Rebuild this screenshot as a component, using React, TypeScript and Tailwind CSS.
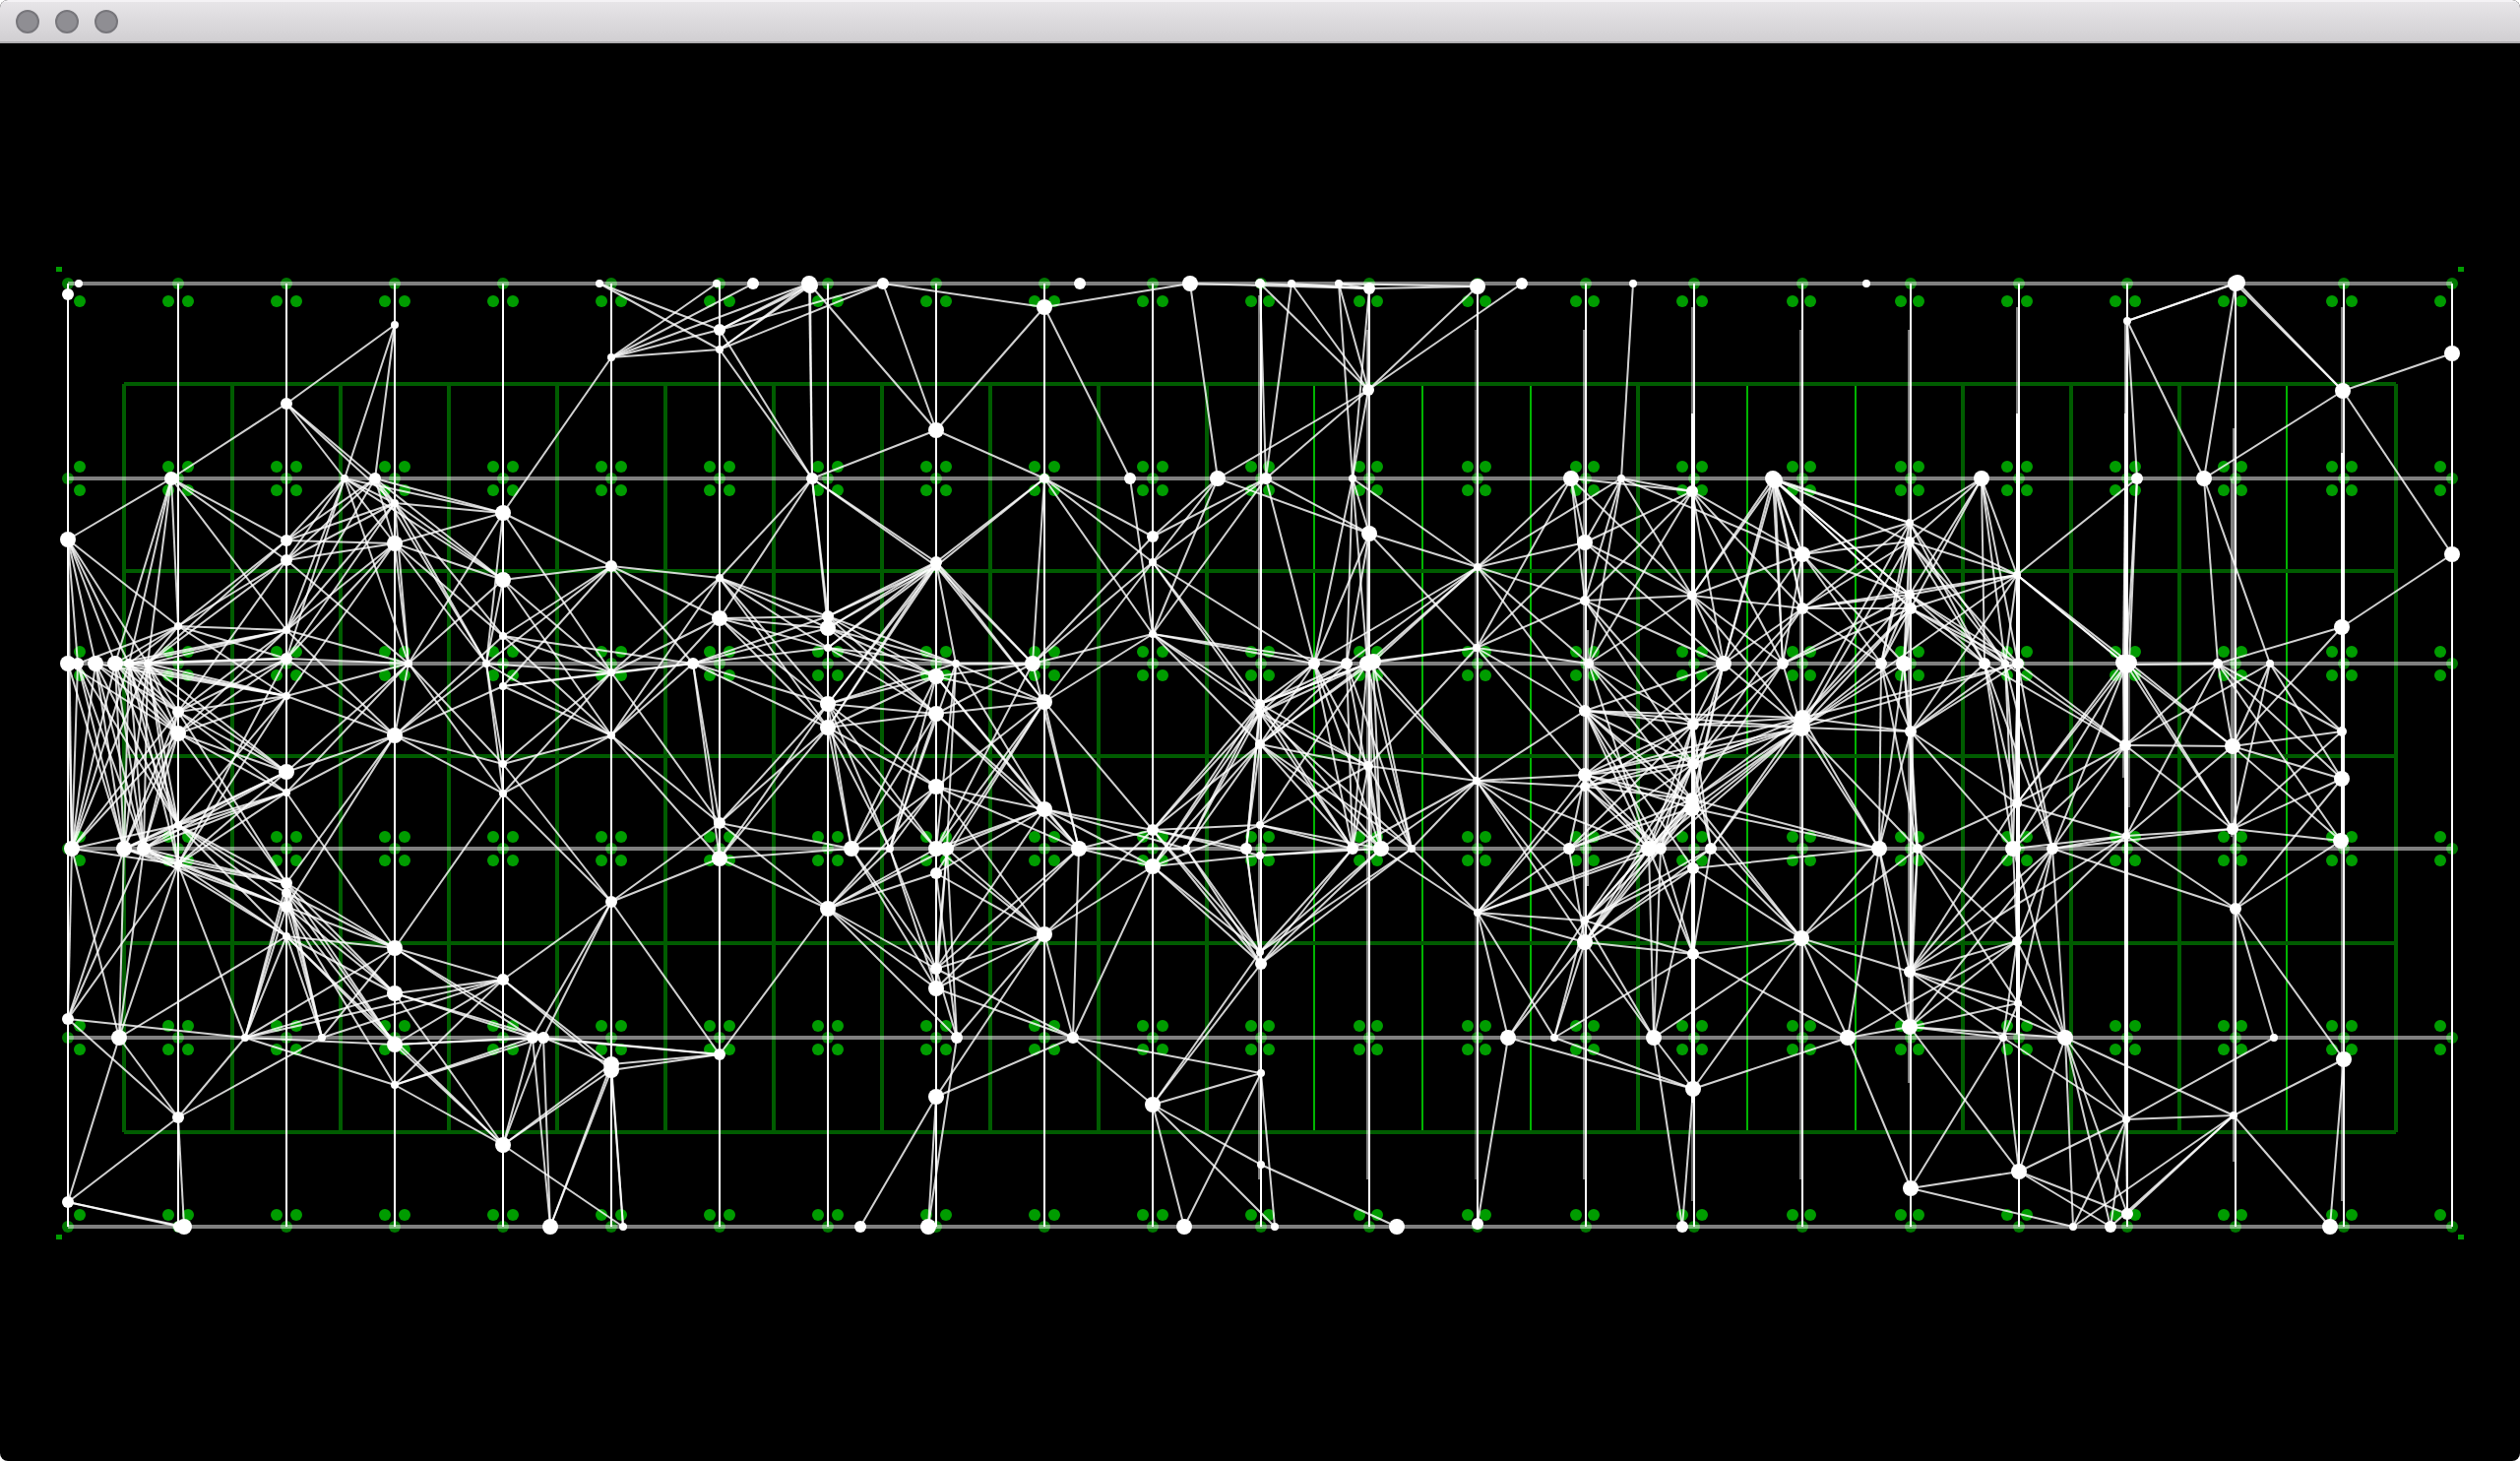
import React from "react";

const COLUMNS = [
  69, 181, 291, 401, 511, 621, 731, 841, 951, 1061, 1171, 1281, 1391, 1501, 1611, 1721, 1831, 1941,
  2051, 2161, 2271, 2381, 2491,
];
const ROWS = [288, 486, 674, 862, 1054, 1246];

const ZONE_COLUMNS = [
  126, 236, 346, 456, 566, 676, 786, 896, 1006, 1116, 1226, 1335, 1445, 1555, 1664, 1775, 1885, 1994,
  2104, 2214, 2323, 2434,
];
const CRISP_ZONE_COLUMNS = new Set([1335, 1445, 1555, 1775, 1885, 2323]);
const ZONE_ROWS = [390, 580, 768, 958, 1150];

const PILLAR_XS = [
  81, 171, 191, 281, 301, 391, 411, 501, 521, 611, 631, 721, 741, 831, 851, 941, 961, 1051, 1071, 1161,
  1181, 1271, 1289, 1381, 1399, 1491, 1509, 1601, 1619, 1709, 1729, 1821, 1839, 1931, 1949, 2039, 2059,
  2149, 2169, 2259, 2277, 2369, 2389, 2479,
];
const PILLAR_YS = [306, 474, 498, 662, 686, 850, 874, 1042, 1066, 1234];

const CORNERS = [
  [60, 273],
  [60, 1256],
  [2500, 273],
  [2500, 1256],
];

/* Second stroke beside a column: x, top, bottom, opacity */
const SHADOW_COLUMNS = [
  [1279, 300, 1198, 0.5],
  [1389, 335, 1198, 0.5],
  [1393, 690, 862, 0.6],
  [1499, 335, 1198, 0.3],
  [1609, 335, 1198, 0.5],
  [1613, 640, 900, 0.6],
  [1719, 312, 420, 0.5],
  [1719, 420, 1120, 1],
  [1719, 1120, 1220, 0.4],
  [1829, 335, 1198, 0.45],
  [1939, 335, 1100, 0.5],
  [1943, 740, 1043, 0.7],
  [2049, 312, 420, 0.5],
  [2049, 420, 1050, 1],
  [2159, 326, 420, 0.6],
  [2159, 420, 1137, 1],
  [2157, 674, 790, 0.5],
  [2163, 674, 820, 0.4],
  [2269, 435, 1180, 0.5],
  [2267, 486, 850, 0.5],
  [2379, 312, 460, 0.5],
  [2379, 460, 860, 1],
  [2379, 860, 1220, 0.5],
];

/* id x y radius */
const NODE_DATA = `
a0 69 299 6|a1 80 288 4|a2 69 548 8|a3 69 674 8|a4 79 674 6|a5 97 674 8|a6 117 674 8|a7 131 674 5|a8 150 674 4
a9 73 862 8|a10 126 862 8|a11 146 862 7|a12 69 1035 6|a13 121 1054 8|a14 69 1221 6|a15 187 1246 8|a16 182 1246 6
b0 174 486 7|b1 181 636 4|b2 181 723 6|b3 181 745 8|b4 181 838 4|b5 181 878 4|b6 181 1135 6|x1 249 1054 4|x2 327 1054 4
c0 291 410 6|c1 291 549 6|c2 291 569 6|c3 291 640 4|c4 291 669 6|c5 291 707 4|c6 291 784 8|c7 291 805 4|c8 291 897 6
c9 291 921 6|c10 291 951 4|c11 291 907 5|x3 350 486 4|x4 381 486 6
d0 401 330 4|d1 401 511 4|d2 401 552 8|d3 415 674 4|d4 401 747 8|d5 401 963 8|d6 401 1009 8|d7 401 1061 8|d8 401 1102 4
e0 511 521 8|e1 511 589 8|e2 494 674 4|e3 511 646 4|e4 511 697 4|e5 511 776 4|e6 511 806 4|e7 511 995 6|e8 541 1054 6
e9 552 1054 6|e10 511 1163 8|e11 559 1246 8
f0 609 288 4|f1 621 363 4|f2 621 575 6|f3 621 683 4|f4 621 747 4|f5 621 916 6|f6 621 1081 8|f7 633 1246 4|f8 621 1087 8
g0 728 288 4|g1 765 288 6|g2 731 335 6|g3 731 355 4|g4 731 587 4|g5 731 628 8|g6 704 674 6|g7 731 836 6|g8 731 872 8|g9 731 1071 6
h0 822 288 8|h1 825 486 6|h2 841 626 6|h3 841 638 8|h4 841 658 4|h5 841 715 8|h6 841 739 8|h7 865 862 8|h8 841 923 8
h9 874 1246 6|h10 897 288 6|h11 823 290 8
i0 951 437 8|i1 951 571 6|i2 971 674 4|i3 951 687 8|i4 951 725 8|i5 951 799 8|i6 904 862 4|i7 951 862 8|i8 951 887 6
i9 951 984 6|i10 951 1004 8|i11 972 1054 6|i12 951 1114 8|i13 943 1246 8|i14 962 862 7|i15 951 575 5
j0 1061 312 8|j1 1097 288 6|j2 1061 486 5|j3 1049 674 8|j4 1061 713 8|j5 1061 822 8|j6 1096 862 8|j7 1061 949 8|j8 1090 1054 6
k0 1148 486 6|k1 1171 545 6|k2 1171 571 4|k3 1171 644 4|k4 1171 843 6|k5 1171 880 8|k6 1205 862 4|k7 1171 1122 8|k8 1203 1246 8
l0 1209 288 8|l1 1280 288 5|l2 1237 486 8|l3 1286 486 6|l4 1280 715 5|l5 1280 724 4|l6 1280 756 5|l7 1280 838 4|l8 1266 862 6
l9 1280 869 4|l10 1280 967 4|l11 1281 979 6|l12 1281 1090 4|l13 1281 1183 4|l14 1295 1246 4
m0 1312 288 4|m1 1360 288 4|m2 1391 293 6|m3 1390 396 6|m4 1374 486 4|m5 1391 542 8|m6 1335 674 6|m7 1368 674 6|m8 1389 674 8
m9 1390 778 5|m10 1374 862 6|m11 1403 862 8|m12 1434 862 4|m13 1419 1246 8|m14 1395 672 8
n0 1501 291 8|n1 1501 576 4|n2 1500 658 4|n3 1500 793 4|n4 1501 927 4|n5 1501 1243 6|n6 1546 288 6|n7 1532 1054 8|n8 1579 1054 4
o0 1659 288 4|o1 1596 486 8|o2 1647 486 4|o3 1610 551 8|o4 1610 610 5|o5 1614 674 5|o6 1610 722 6|o7 1610 787 7|o8 1610 799 5
o9 1594 862 6|o10 1610 935 4|o11 1610 957 8
p0 1719 499 6|p1 1719 605 5|p2 1720 736 6|p3 1720 776 6|p4 1719 812 7|p5 1720 882 6|p6 1720 969 6|p7 1720 1106 8|p8 1709 1246 6
p9 1680 1054 8|p10 1675 862 8|p11 1687 862 6|p12 1738 862 6|p13 1751 674 8|p14 1719 821 8
q0 1801 486 8|q1 1831 563 8|q2 1831 618 6|q3 1811 674 6|q4 1830 739 9|q5 1830 953 8|q6 1877 1054 8|q7 1909 862 8|q8 1831 729 8
q9 1803 488 8
r0 1940 531 4|r1 1940 550 5|r2 1940 604 5|r3 1941 618 6|r4 1911 674 6|r5 1934 674 8|r6 1941 743 6|r7 1948 862 5|r8 1940 987 6
r9 1940 1043 8|r10 1941 1207 8|r11 1896 288 4
s0 2013 486 8|s1 2049 584 4|s2 2016 674 6|s3 2037 674 4|s4 2050 674 6|s5 2049 816 5|s6 2045 862 8|s7 2085 862 6|s8 2049 956 5
s9 2050 1019 4|s10 2035 1054 4|s11 2098 1054 8|s12 2051 1190 8
t0 2161 326 4|t1 2171 486 6|t2 2160 675 9|t3 2159 757 6|t4 2160 849 4|t5 2160 1137 4|t6 2161 1233 6|t7 2144 1246 6|t8 2106 1246 4
t9 2157 673 8|t10 2163 673 8
u0 2271 288 8|u1 2239 486 8|u2 2253 674 5|u3 2306 674 4|u4 2268 758 8|u5 2268 842 6|u6 2271 923 6|u7 2310 1054 4|u8 2269 1133 4
u9 2273 287 8
v0 2380 397 8|v1 2379 637 8|v2 2379 743 5|v3 2379 791 8|v4 2378 854 8|v5 2381 1076 8|v6 2367 1246 8
w0 2491 359 8|w1 2491 563 8`;

/* Each line: a node followed by the nodes it links to */
const LINK_DATA = `
a2 b0 b1 a4 a5 a6 a7 a8 a9
b0 c0 c1 c2 c3 b1 a6 a7 a8
b1 c1 c2 c3 c4 c5 a4 a6 a7 a8
a3 a9 a10 b3
a4 a9 a10 a11 b4
a5 a9 a10 a11 b4 b2 b3 c5
a6 a9 a10 a11 b4 b2 b3 c3 c4 c5
a7 a9 a10 a11 b4 b5 b2 b3 c3 c4 c5 c6
a8 a9 a10 a11 b4 b5 b2 b3 c1 c2 c3 c4 c5 c6
b2 c2 c3 c4 c5 c6 c7 a9 a10 a11 c8
b3 c3 c4 c5 c6 c7 a9 a10 a11 c8
b4 c5 c6 c7 c8 c9 c10 a9 a10 a11 c11
b5 c4 c5 c6 c7 c8 c9 c10 a9 a10 a11 a12 a13 x1
a9 a12 a13
a10 a12 a13 c6 c7 c8 c9
a11 a12 a13 c6 c7 c8 c9 c10
a13 a14 b6 c10
a12 b6 x1
a14 b6 a15 a16
b6 x1 x2 a15
x1 c8 c9 c10 c11 d5 d6 d8 e7 d7
x2 c8 c9 c10 c11 d5 e7
c8 d5 d6 d7
c9 d5 d6 d7 d8
c10 d5 d6 d7 e10
c11 d5 d6 d7
d5 e6 c7 e7 e8 e9
d6 e7 e8 e9 e10
d7 e7 e8 e9 e10
d8 e7 e8 e9 e10
e7 f5 f6 f8
e8 e10 e11 f5 g9
e9 e10 e11 f5 g9 f6
e10 f6 f7 f8
e11 f6 f8
f6 f7 g9
f8 g9 f7
f5 g7 g8 g9 e5 e6
g9 h8
x3 c0 d0 c1 c2 c3 d2 d3 e0 e1 c4 d1
x4 c0 d0 c1 c2 c3 d1 d2 e0 e1 e2
c0 d1 d0
c1 d1 d2
c2 d1 d2 d3
c3 d1 d2 d3 d4
c4 d2 d3 d4 d1
c5 d2 d3 d4
c6 d3 d4
c7 d3 d4
d1 e0 e1 e2 e3 d3
d2 e0 e1 e2 e3 d3
d3 e0 e1 e5 e6 d4
d4 e2 e3 e4 e5 e6 c8 c9
e0 f1 f2 f3 e2
e1 f2 f3 f4 e2
e2 f2 f3 f4 e5 e6
e3 f2 f3 f4 g6
e4 f2 f3 f4 g6
e5 f3 f4
e6 f3 f4
f1 g0 g1 g2 g3 h0
f0 g2 g3
g2 h0 h11 h10 h1
g3 h0 h11 h10 h1
h0 h1 i0
h11 h1
h10 i0 j0
i0 h1 j0 j2
j0 l0 k0
h1 g4 g5 i1 i15 h2 h3
f2 g4 g5 g6
f3 g4 g5 g6 g7
f4 g4 g5 g6 g7 g8
g6 g7 g8 h2 h3 h4 h5 h6
g4 h2 h3 h4 h5 h6
g5 h2 h3 h4 h5 h6
g7 h5 h6 h7 h8
g8 h5 h6 h7 h8
h2 i1 i2 i3 i4
h3 i1 i2 i3 i4
h4 i1 i2 i3 i4
h5 i1 i2 i3 i4 i5 i6 h7 i7
h6 i1 i3 i4 i5 i6 h7 i7
h7 i3 i4 i5 i9 i6 i10
h8 i6 i7 i8 i9 i10 i11 i5 i14
i1 j2 j3 j4 i2
i15 h2 h3 h4 h5 h6 j2 j3 j4
i2 j4 j5 i6 i7 i14 j3
i3 j3 j4 j5 j6 i6
i4 j3 j4 j5 j6 i6
i5 j4 j5 j6 j7 i6
i6 i9 i10
i7 j3 j4 j5 j7 i9
i14 j4 j5 j7 i9 i10 i11
i8 j4 j5 j7
i9 j5 j7 j8 j6
i10 j7 j8 j6
i11 i9 i8 j7 i13
i12 j7 h9 i13 j8
j2 k1 k2 k3 j3
k0 k3
j3 k1 k2 k3
j4 k2 k3 k4
j5 j6 k4 k5 k6
j6 j3 j4 k4 k5 k6 j8
j7 j8 k4 k5
j8 k5 k7 l12
k7 l10 l11 l12 l14 k8 l13
k8 l12
l12 l14
l13 m13
k1 l2 l3
k2 l2 l3 m6 l4 l5
k3 l2 l3 m6 m7 l4 l5 l6
l2 m3 m5
l0 l2 m2
l1 m3 l3 m2
m0 l3 m3 m2
m1 m3 m4 m2
m2 m4 n0 m3
m3 n0 n6 l3 m4
n0 m1
l3 m5 m6
m4 m5 m6 m7 m8 n1
m5 m6 m7 m8 n1 n2
m6 l4 l5 l6 m9 m10 m11 n1
m7 l4 l5 l6 n1 m10 m11 m12
m8 l4 l5 l6 n1 n2 n3 m10 m11 m12 l7
m14 l6 l4 n2 n3 m12 m11 n1
l4 k4 k5 k6 l8 m9 m10 m11
l5 k4 k5 k6 l8 m9 m10 m12
l6 k4 k5 k6 l8 m9 m10 m11 m12
l7 k4 k5 m9 m10 m11
l8 k4 l10 l11
l9 k5 k4 m10 m11
l10 k4 k5 k6 m10 m11 m12
l11 k4 k5 k6 m10 m11 m12
m9 n2 n3 m10 m11 m12
m11 n3 n4
m12 n3 n4
m10 n3
n1 o1 o2 o3 o4 o5 o6
n2 o1 o3 o4 o5 o6 o7
n3 o6 o7 o8 o9 o10 o11 p10
n4 o7 o8 o9 p10 p11 o10 o11 n7 n8
n5 n7
o0 o2
o1 o3 o4 p1 p0
o2 p0 o3 o4 o5 p1 q1
o3 p0 p1 p13
o4 p0 p1 p2 p13 p3
o5 p1 p2 p3 p4 p0 p10
p0 q1 q2 q3 p13
p1 q1 q2 q3 p13 q0 q4
p13 q0 q1 q2 q4 p2 p3 p4 p14 o6 o7
q0 q1 q2 q3 r0 r1 r2 r3
q9 p1 p13 q1 q2 q3 r0 r2 r3
q1 r0 r1 r2 q3 r4 r5
q2 r0 r1 r2 r3 r4 p2 p3
q3 p2 p3 p4 r2 r3 q4
q4 o7 o8 o6 p2 p3 p4 p14 p12 p11 p10 r1 r3 r6 r4 r5 q7 r7
q8 o6 o7 p2 p3 p4 r0 r2 r3 r6 q7 p12
o6 p2 p3 p4 p14 p10 p11 p5
o7 p2 p3 p4 p14 p10 p11
o8 p2 p3 p4 p10 p11
p2 p10 p11 q2 q3 p12
p3 p10 p11 p12
p4 p10 p11
p14 p10 p11
o9 p2 p3 p4 p14 o11 o7
o10 p10 p11 p12 p5 p3 p4
o11 p10 p11 p12 p5 p3 p4 p6 p9 n7 n8
o10 n7 n8 p9 p6
p5 q7 q5 p9
p4 q7 q5
p14 q7 q5
p6 q5 q6 n8 p10 p11 p12
p7 n7 n8 p9 q5 q6 p8
p9 p8 p10 p11 q5
p12 q5
q5 q7 r7 r8 r9 q6
q6 q7 r9 r10 s8
q7 r8 r9 r5 r6 r4
r7 r6 r8 r9 s8 s9 s5
r0 s0 s1 s2 s3
r1 s0 s1 s2 s3 s4
r2 s0 s1 s2 s3 s4
r3 s0 s1 s2 s3 s4
r4 r0 r1 r2 r3 r6 r7
r5 r1 r2 r3 r6 r7
r6 s2 s3 s4 s5 s6 s1
s0 s1 s2 s3 s4
s1 t1 t2 t9 t10 s3 q4 q2
s2 s6 s7 s5 t3
s3 s6 s7 s5 t3
s4 s6 s7 t3 q4 q8
r8 s5 s7 s8 s9 s6 s10 s11 t4
r9 s8 s9 s10 s11 s7 s12
r10 s12 t8 s10
t2 s5 s6 s7 u4 u2 u5 t1
t9 s5 t4 t0
t10 t1 u4 u5
t0 t1 u0 u9 u1
t3 u2 u3 u4 s5 s6 s7 u5
t4 s5 s7 s6 u2 u4 u5 u6 s8
s7 u5 u6 s8 s9 s11 s4
s6 s8 s11 t4
s8 s11
u0 u1 v0
u9 v0
u1 v0 u2 u3
u2 v1 v2 v4 u4 v3
u3 v2 v3 u4 u5
u4 v1 v2 v3 v4
u5 v3 v4 v2
u6 v3 v4 u7 v5
u7 t5
s11 s12 t5 t6 t7 t8 u8 s9
s10 s12 s9 t5 s8
s12 t5 t6 t7
t5 u8 t7 t6 t8
u8 t6 t7 t8 v5 v6
v5 v6
v0 w0 w1
v1 w1`;

type Node = { id: string; x: number; y: number; r: number };

const NODES: Node[] = NODE_DATA.trim()
  .split(/[|\n]/)
  .map((entry) => {
    const [id, x, y, r] = entry.split(" ");
    return { id, x: Number(x), y: Number(y), r: Number(r) };
  });

function buildLinks(): [Node, Node][] {
  const byId = new Map(NODES.map((n) => [n.id, n]));
  const seen = new Set<string>();
  const links: [Node, Node][] = [];
  for (const line of LINK_DATA.trim().split("\n")) {
    const [from, ...targets] = line.split(" ");
    for (const to of targets) {
      const key = [from, to].sort().join("-");
      const a = byId.get(from);
      const b = byId.get(to);
      if (!a || !b || seen.has(key)) continue;
      seen.add(key);
      links.push([a, b]);
    }
  }
  return links;
}

const LINKS = buildLinks();

function TitleBar() {
  return (
    <header className="flex h-11 shrink-0 items-center gap-4 border-t-2 border-b-2 border-t-[#f4f2f5] border-b-[#b0aeb1] bg-linear-to-b from-[#e7e5e8] to-[#d1cfd2] px-4">
      {["Close", "Minimize", "Zoom"].map((label) => (
        <button
          key={label}
          type="button"
          aria-label={label}
          className="size-6 rounded-full border-2 border-[#77767b] bg-[#8f8e93]"
        />
      ))}
    </header>
  );
}

function Graph() {
  return (
    <svg
      viewBox="0 44 2560 1440"
      className="block h-full w-full"
      role="img"
      aria-label="Node graph over a column grid"
    >
      <g stroke="#005c00" strokeWidth={4}>
        {ZONE_COLUMNS.map((x) =>
          CRISP_ZONE_COLUMNS.has(x) ? (
            <line key={x} x1={x} x2={x} y1={390} y2={1150} stroke="#00b400" strokeWidth={2} />
          ) : (
            <line key={x} x1={x} x2={x} y1={390} y2={1150} />
          ),
        )}
        {ZONE_ROWS.map((y) => (
          <line key={y} x1={126} x2={2434} y1={y} y2={y} />
        ))}
      </g>

      <g fill="#009c00">
        {PILLAR_XS.map((x) =>
          PILLAR_YS.map((y) => <circle key={`${x}-${y}`} cx={x} cy={y} r={6} />),
        )}
        {CORNERS.map(([x, y]) => (
          <rect key={`${x}-${y}`} x={x - 3} y={y - 2} width={6} height={5} />
        ))}
      </g>
      <g fill="#007800">
        {COLUMNS.map((x) =>
          ROWS.map((y) => <circle key={`${x}-${y}`} cx={x} cy={y} r={6} />),
        )}
      </g>

      <g stroke="#ffffff" strokeWidth={4} strokeOpacity={0.5}>
        {ROWS.map((y) => (
          <line key={y} x1={69} x2={2491} y1={y} y2={y} />
        ))}
      </g>
      <g stroke="#ffffff" strokeWidth={2}>
        {SHADOW_COLUMNS.map(([x, top, bottom, opacity]) => (
          <line key={`${x}-${top}`} x1={x} x2={x} y1={top} y2={bottom} strokeOpacity={opacity} />
        ))}
        {COLUMNS.map((x) => (
          <line key={x} x1={x} x2={x} y1={288} y2={1246} />
        ))}
      </g>

      <g stroke="#ffffff" strokeWidth={2} strokeOpacity={0.82}>
        {LINKS.map(([a, b]) => (
          <line key={`${a.id}-${b.id}`} x1={a.x} y1={a.y} x2={b.x} y2={b.y} />
        ))}
      </g>
      <g fill="#ffffff">
        {NODES.map((n) => (
          <circle key={n.id} cx={n.x} cy={n.y} r={n.r} />
        ))}
      </g>
    </svg>
  );
}

export default function App() {
  return (
    <div className="h-screen bg-white">
      <div className="flex h-full flex-col overflow-hidden rounded-lg bg-black">
        <TitleBar />
        <main className="min-h-0 flex-1">
          <Graph />
        </main>
      </div>
    </div>
  );
}
